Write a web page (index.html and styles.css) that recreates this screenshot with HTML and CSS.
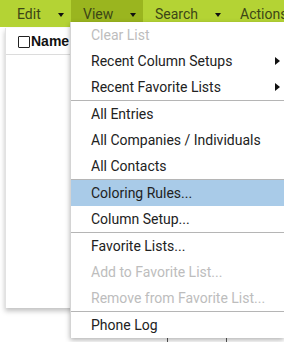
FILE: index.html
```html
<!DOCTYPE html>
<html lang="en">
  <head>
    <meta charset="UTF-8" />
    <title>Contacts</title>
    <link rel="stylesheet" href="styles.css">
  </head>
  <body>
    <header class="menubar">
      <div class="menubar-item">Edit<span class="caret"></span></div>
      <div class="menubar-item aktiv">View<span class="caret"></span></div>
      <div class="menubar-item soeg">Search<span class="caret"></span></div>
      <div class="menubar-item sidste">Actions</div>

      <ul class="dropdown">
        <li class="disabled">Clear List</li>
        <li class="sub">Recent Column Setups<span class="pil"></span></li>
        <li class="sub">Recent Favorite Lists<span class="pil"></span></li>
        <li class="sep">All Entries</li>
        <li>All Companies / Individuals</li>
        <li>All Contacts</li>
        <li class="sep valgt">Coloring Rules...</li>
        <li>Column Setup...</li>
        <li class="sep">Favorite Lists...</li>
        <li class="disabled">Add to Favorite List...</li>
        <li class="disabled">Remove from Favorite List...</li>
        <li class="sep">Phone Log</li>
      </ul>
    </header>

    <main>
      <section class="kort">
        <div class="kort-head">
          <span class="checkbox"></span>
          <span class="kolonne">Name</span>
        </div>
      </section>
      <div class="pager">
        <span></span>
        <span></span>
      </div>
    </main>
  </body>
</html>
```

FILE: styles.css
```css
* {
  box-sizing: border-box;
  margin: 0;
  padding: 0;
}
html,
body {
  overflow: hidden;
  height: 100%;
}
body {
  background-color: #fff;
  font-family: Roboto, "Liberation Sans", sans-serif;
}

/* topmenu */
.menubar {
  position: relative;
  display: flex;
  height: 27px;
  padding-left: 5px;
  background-color: #b4d334;
}
.menubar-item {
  display: flex;
  flex-shrink: 0;
  align-items: center;
  width: 66px;
  height: 22px;
  padding: 6px 7px 0 12px;
  font-size: 14px;
  line-height: 16px;
  color: #3c4616;
}
.menubar-item.aktiv {
  width: 72px;
}
.menubar-item.soeg {
  width: 85px;
}
.menubar-item.sidste {
  width: 56px;
  padding: 6px 0 0 12px;
  overflow: hidden;
  white-space: nowrap;
}
.aktiv {
  background-color: #9ab51f;
}
.caret {
  margin-left: auto;
  margin-top: 1px;
  border-left: 3.5px solid transparent;
  border-right: 3.5px solid transparent;
  border-top: 4px solid #111;
}

/* dropdown */
.dropdown {
  position: absolute;
  top: 22px;
  left: 70px;
  width: 214px;
  list-style: none;
  background-color: #fff;
  border-left: 1px solid #d4d4d4;
  box-shadow: 0 2px 5px rgba(0, 0, 0, 0.3);
  z-index: 2;
}
.dropdown li {
  display: flex;
  align-items: center;
  justify-content: space-between;
  height: 26px;
  padding: 0 4px 0 20px;
  font-size: 14px;
  color: #222;
}
.dropdown li.sep {
  height: 27px;
  border-top: 1px solid #b5b5b5;
}
.dropdown li.disabled {
  color: #bdbdbd;
}
.dropdown li.valgt {
  background-color: #a9cbe8;
}
.pil {
  border-top: 4px solid transparent;
  border-bottom: 4px solid transparent;
  border-left: 5px solid #111;
}

/* listen bag menuen */
main {
  padding: 1px 0 0 5px;
}
.kort {
  width: 279px;
  height: 280px;
  background-color: #fff;
  border-left: 1px solid #e2e2e2;
  box-shadow: 0 3px 5px rgba(0, 0, 0, 0.25);
}
.kort-head {
  display: flex;
  align-items: center;
  height: 27px;
  padding-left: 12px;
  border-bottom: 1px solid #dcdcdc;
  font-family: "Liberation Sans", Arial, sans-serif;
}
.checkbox {
  width: 12px;
  height: 12px;
  margin-top: 1px;
  border: 1px solid #222;
  border-radius: 1px;
}
.kolonne {
  font-size: 14px;
  font-weight: bold;
  color: #111;
  margin-left: 1px;
}
.pager {
  display: flex;
  height: 10px;
  margin-top: 29px;
  padding-left: 162px;
}
.pager span {
  width: 75px;
  border-left: 1px solid #555;
}
```
